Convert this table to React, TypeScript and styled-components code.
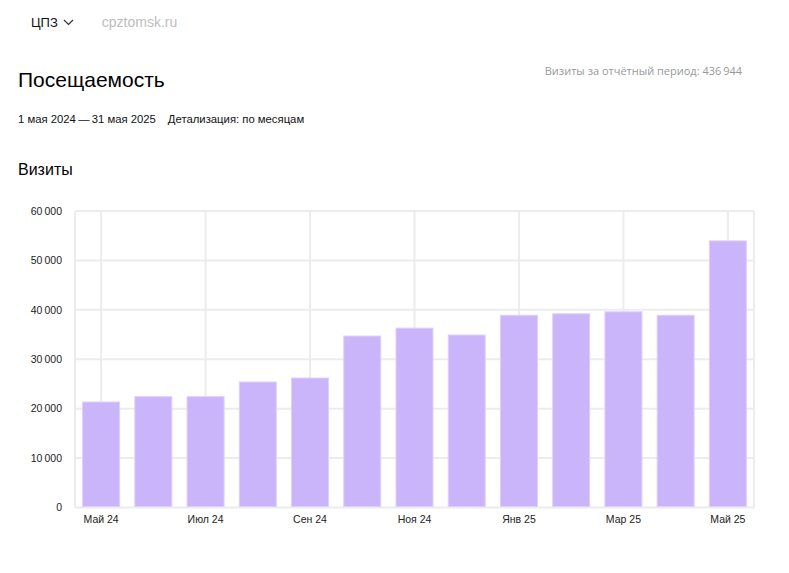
import styled, { createGlobalStyle } from "styled-components";

const GlobalStyle = createGlobalStyle`
  html, body {
    margin: 0;
    padding: 0;
    background: #ffffff;
  }
  body {
    font-family: "Liberation Sans", Arial, sans-serif;
    color: #1a1a1a;
  }
`;

const dataVisits = [
  { label: "Май 24", value: 21350 },
  { label: "Июн 24", value: 22430 },
  { label: "Июл 24", value: 22430 },
  { label: "Авг 24", value: 25400 },
  { label: "Сен 24", value: 26200 },
  { label: "Окт 24", value: 34700 },
  { label: "Ноя 24", value: 36300 },
  { label: "Дек 24", value: 34900 },
  { label: "Янв 25", value: 38900 },
  { label: "Фев 25", value: 39200 },
  { label: "Мар 25", value: 39600 },
  { label: "Апр 25", value: 38900 },
  { label: "Май 25", value: 53950 },
];

const yTicks = [0, 10000, 20000, 30000, 40000, 50000, 60000];

// plot area inside the chart svg
const PLOT_LEFT = 75;
const PLOT_RIGHT = 754;
const PLOT_TOP = 10;
const PLOT_BOTTOM = 306.5;
const MAX_VALUE = 60000;
const BAR_WIDTH = 37;

const formatNumber = (val: number) =>
  val === 0 ? "0" : `${Math.floor(val / 1000)}\u2009${String(val % 1000).padStart(3, "0")}`;

const VisitsChart = () => {
  const slot = (PLOT_RIGHT - PLOT_LEFT) / dataVisits.length;
  const yOf = (val: number) =>
    PLOT_BOTTOM - (val / MAX_VALUE) * (PLOT_BOTTOM - PLOT_TOP);

  return (
    <ChartSvg viewBox="0 0 789 340" width={789} height={340}>
      {/* horizontal grid */}
      {yTicks.map((tick) => (
        <g key={tick}>
          <line
            x1={PLOT_LEFT}
            x2={PLOT_RIGHT}
            y1={yOf(tick)}
            y2={yOf(tick)}
            stroke="#ececec"
            strokeWidth={2}
          />
          <AxisText x={62} y={yOf(tick) + 1} textAnchor="end" dominantBaseline="middle">
            {formatNumber(tick)}
          </AxisText>
        </g>
      ))}
      {/* vertical grid, every other month */}
      {dataVisits.map((each, index) =>
        index % 2 === 0 ? (
          <line
            key={each.label}
            x1={PLOT_LEFT + slot * (index + 0.5)}
            x2={PLOT_LEFT + slot * (index + 0.5)}
            y1={PLOT_TOP}
            y2={PLOT_BOTTOM}
            stroke="#ececec"
            strokeWidth={2}
          />
        ) : null
      )}
      <line x1={PLOT_LEFT} x2={PLOT_LEFT} y1={PLOT_TOP} y2={PLOT_BOTTOM} stroke="#ececec" strokeWidth={2} />
      <line x1={PLOT_RIGHT} x2={PLOT_RIGHT} y1={PLOT_TOP} y2={PLOT_BOTTOM} stroke="#ececec" strokeWidth={2} />
      {/* bars */}
      {dataVisits.map((each, index) => {
        const cx = PLOT_LEFT + slot * (index + 0.5);
        const top = yOf(each.value);
        return (
          <rect
            key={each.label}
            x={cx - BAR_WIDTH / 2}
            y={top}
            width={BAR_WIDTH}
            height={PLOT_BOTTOM - 1 - top}
            fill="#cab4fa"
            stroke="#ddd0fc"
            strokeWidth={1}
          />
        );
      })}
      {/* x labels */}
      {dataVisits.map((each, index) =>
        index % 2 === 0 ? (
          <AxisText
            key={each.label}
            x={PLOT_LEFT + slot * (index + 0.5)}
            y={319.5}
            textAnchor="middle"
            dominantBaseline="middle"
          >
            {each.label}
          </AxisText>
        ) : null
      )}
    </ChartSvg>
  );
};

const App = () => {
  return (
    <StyledComponent>
      <GlobalStyle />
      <TopBar>
        <CounterSelect>
          <CounterName>ЦПЗ</CounterName>
          <svg width="11" height="7" viewBox="0 0 11 7">
            <path d="M1 1l4.5 4.5L10 1" fill="none" stroke="#333" strokeWidth="1.2" />
          </svg>
        </CounterSelect>
        <SiteName>cpztomsk.ru</SiteName>
      </TopBar>
      <Content>
        <HeaderRow>
          <Title>Посещаемость</Title>
          <TotalText>Визиты за отчётный период: 436{"\u2009"}944</TotalText>
        </HeaderRow>
        <PeriodRow>
          <span>1 мая 2024{"\u2009"}—{"\u2009"}31 мая 2025</span>
          <span>Детализация: по месяцам</span>
        </PeriodRow>
        <SectionTitle>Визиты</SectionTitle>
      </Content>
      <VisitsChart />
    </StyledComponent>
  );
};

const StyledComponent = styled.div`
  width: 789px;
  min-height: 573px;
  display: flex;
  flex-direction: column;
  box-sizing: border-box;
`;

const TopBar = styled.div`
  display: flex;
  align-items: center;
  height: 44px;
  padding-left: 31px;
  gap: 28px;
`;

const CounterSelect = styled.div`
  display: flex;
  align-items: center;
  gap: 5px;
  cursor: pointer;
`;

const CounterName = styled.span`
  font-size: 13px;
  color: #111;
`;

const SiteName = styled.span`
  font-size: 14px;
  color: #bdbdbd;
`;

const Content = styled.div`
  display: flex;
  flex-direction: column;
  padding: 0 47px 0 18px;
`;

const HeaderRow = styled.div`
  display: flex;
  justify-content: space-between;
  align-items: flex-start;
`;

const Title = styled.h1`
  margin: 24px 0 0;
  font-size: 21px;
  line-height: 24px;
  font-weight: 400;
  color: #000;
`;

const TotalText = styled.div`
  margin-top: 20px;
  font-family: "Open Sans", sans-serif;
  font-size: 11px;
  line-height: 14px;
  color: #999;
`;

const PeriodRow = styled.div`
  display: flex;
  gap: 12px;
  margin-top: 20px;
  font-size: 11.3px;
  line-height: 14px;
  color: #111;
`;

const SectionTitle = styled.h2`
  margin: 34px 0 0;
  font-size: 16px;
  line-height: 20px;
  font-weight: 400;
  color: #000;
`;

const ChartSvg = styled.svg`
  display: block;
  margin-top: 21px;
`;

const AxisText = styled.text`
  font-family: "Liberation Sans", Arial, sans-serif;
  font-size: 10.5px;
  fill: #222;
`;

export default App;
